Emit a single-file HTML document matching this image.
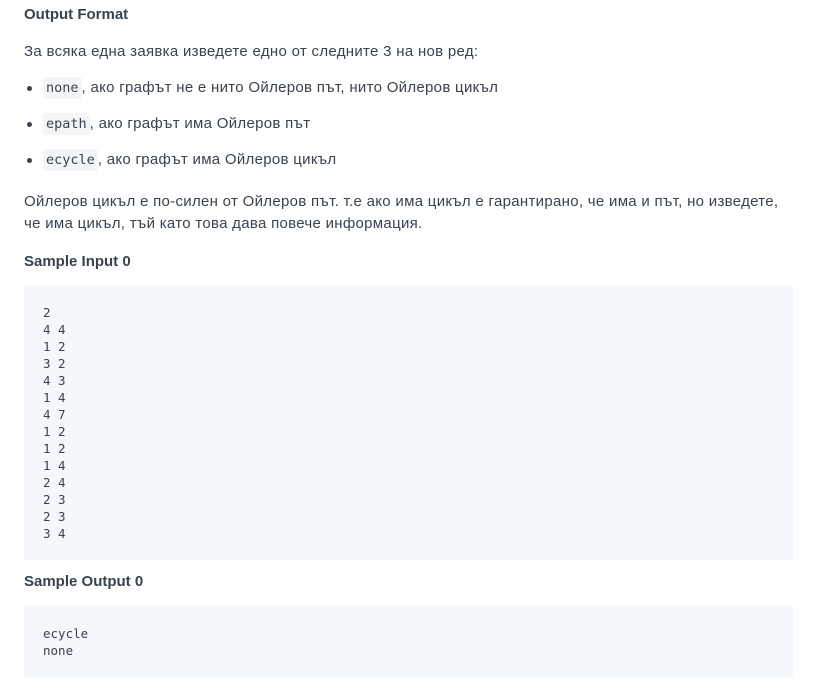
<!DOCTYPE html><html><head><style>
body{margin:0;background:#fff;width:840px;height:690px;overflow:hidden;font-family:"Liberation Sans",sans-serif;color:#39424e;font-size:15px;letter-spacing:0.3px}
.a{position:absolute;white-space:nowrap}
h{position:absolute;left:24px;font-weight:bold;font-size:15px;color:#39424e;letter-spacing:0}
code{font-family:"DejaVu Sans Mono",monospace;font-size:13.5px;letter-spacing:0;background:#f3f5f7;padding:3px 3px;border-radius:3px;color:#39424e}
.dot{position:absolute;left:27px;width:5px;height:5px;border-radius:50%;background:#39424e}
pre{position:absolute;left:24px;width:769px;margin:0;background:#f4f8fc;font-family:"DejaVu Sans Mono",monospace;font-size:12.5px;letter-spacing:0;line-height:17px;padding:0 0 0 19px;box-sizing:border-box;color:#39424e}
</style></head><body>
<h style="top:6px">Output Format</h>
<div class="a" style="left:24px;top:43px">За всяка една заявка изведете едно от следните 3 на нов ред:</div>
<div class="dot" style="top:86px"></div><div class="a" style="left:43px;top:79px"><code>none</code>, ако графът не е нито Ойлеров път, нито Ойлеров цикъл</div>
<div class="dot" style="top:122px"></div><div class="a" style="left:43px;top:115px"><code>epath</code>, ако графът има Ойлеров път</div>
<div class="dot" style="top:158px"></div><div class="a" style="left:43px;top:151px"><code>ecycle</code>, ако графът има Ойлеров цикъл</div>
<div class="a" style="left:24px;top:191px;line-height:22px">Ойлеров цикъл е по-силен от Ойлеров път. т.е ако има цикъл е гарантирано, че има и път, но изведете,<br>че има цикъл, тъй като това дава повече информация.</div>
<h style="top:253px">Sample Input 0</h>
<pre style="top:286px;height:274px;padding-top:18px">2
4 4
1 2
3 2
4 3
1 4
4 7
1 2
1 2
1 4
2 4
2 3
2 3
3 4</pre>
<h style="top:573px">Sample Output 0</h>
<pre style="top:606px;height:72px;padding-top:19px">ecycle
none</pre>
</body></html>
